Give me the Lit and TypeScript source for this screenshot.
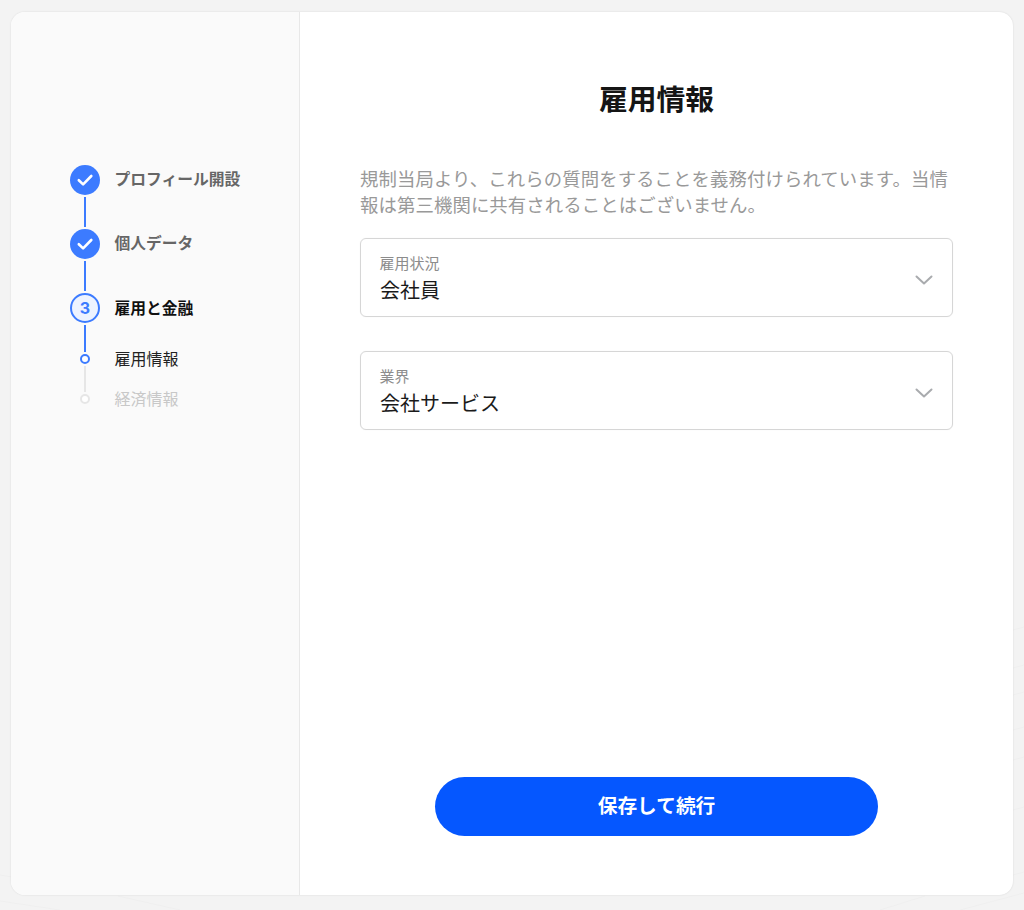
import { LitElement, html, css, svg } from "lit";
import { customElement } from "lit/decorators.js";

const check = html`<svg width="30" height="30" viewBox="0 0 30 30"><path d="M8.8 15.2l4.3 4.2 8.2-8.4" fill="none" stroke="#fff" stroke-width="2.6" stroke-linecap="round" stroke-linejoin="round"/></svg>`;
const chevron = html`<svg class="chev" width="18" height="10" viewBox="0 0 18 10"><path d="M1.5 1.5L9 8.5l7.5-7" fill="none" stroke="#a9abae" stroke-width="2" stroke-linecap="round" stroke-linejoin="round"/></svg>`;

@customElement("app-root")
export class AppRoot extends LitElement {
  static styles = css`
    :host { display: block; width: 1024px; height: 910px; position: relative; overflow: hidden; background: #f3f3f3;
      font-family: "Inter", "Noto Sans CJK JP", sans-serif; color: #151515; }
    .bg { position: absolute; inset: 0; }
    .page { position: relative; box-sizing: border-box; height: 910px; padding: 12px 11px 15px 11px; }
    .card { display: flex; height: 883px; border-radius: 14px; overflow: hidden; background: #fff; box-shadow: 0 0 2px rgba(0,0,0,.12); }
    .side { box-sizing: border-box; width: 289px; flex: none; background: #fafafa; border-right: 1px solid #e8e8e8; padding: 153px 0 0 59px; }
    .step { display: flex; align-items: center; gap: 14.5px; height: 30px; font-size: 15.75px; font-weight: 700; color: #666; }
    .step span.t { margin-top: -4px; }
    .step.cur { color: #111; }
    .step.cur span.t { margin-top: -2px; }
    .dot { box-sizing: border-box; width: 30px; height: 30px; border-radius: 50%; background: #3c7bff; display: flex; flex: none; }
    .dot.num { background: #edf3ff; border: 2px solid #3c7bff; color: #3c7bff; font-size: 16px; font-weight: 700; align-items: center; justify-content: center; }
    .line { width: 2px; height: 30px; margin: 2px 0 2px 14px; background: #3c7bff; }
    .sub { display: flex; align-items: center; height: 14px; font-size: 16px; color: #222; }
    .sub .t { margin-top: -2px; }
    .sub.off .t { margin-top: -3px; }
    .sub .mark { width: 30px; flex: none; display: flex; justify-content: center; margin-right: 14.5px; }
    .ring { box-sizing: border-box; width: 10px; height: 10px; border-radius: 50%; border: 2px solid #3c7bff; background: #fff; }
    .sub.off { color: #c8c8c8; }
    .sub.off .ring { border-color: #e6e6e6; }
    .line.l1 { height: 27px; margin: 2px 0 0 14px; }
    .line.l2 { height: 26px; margin: 0 0 0 14px; background: #e6e6e6; }
    .main { flex: 1; box-sizing: border-box; padding: 66px 60px 59px 60px; display: flex; flex-direction: column; }
    h1 { margin: 0; font-size: 28.8px; line-height: 44px; font-weight: 700; text-align: center; color: #151515; }
    .intro { margin: 44px 0 0; font-size: 18.4px; letter-spacing: .09px; line-height: 26px; color: #999; }
    .sel { box-sizing: border-box; height: 79px; margin-top: 20px; padding: 14px 19px 0; border: 1px solid #d6d6d6; border-radius: 6px; position: relative; box-shadow: 0 0 1px rgba(0,0,0,.1); }
    .sel + .sel { margin-top: 34px; }
    .lab { font-size: 15px; line-height: 22px; color: #8c8c8c; margin-left: -.5px; }
    .val { font-size: 20px; line-height: 32px; color: #1a1a1a; }
    .chev { position: absolute; right: 19px; top: 36px; }
    .btn { margin: auto auto 0; width: 443px; height: 59px; padding: 0 0 4px; border: 0; border-radius: 30px; background: #0557ff; color: #fff; font: inherit; font-size: 19.7px; font-weight: 700; }
  `;
  render() {
    return html`
      <svg class="bg" width="1024" height="910" viewBox="0 0 1024 910">
        ${svg`<g fill="none" stroke="#efefef" stroke-width="1">
          <path d="M0 875L60 885M0 901L60 910M118 896L180 910M1013 630L1024 627M1013 668L1024 665M1013 695L1024 692M1013 730L1024 727M1013 760L1024 757M1013 810L1024 807M1013 875L1024 872M880 910L925 896M960 910L1024 893"/>
        </g>`}
      </svg>
      <div class="page">
        <div class="card">
          <aside class="side">
            <div class="step"><span class="dot">${check}</span><span class="t">プロフィール開設</span></div>
            <div class="line"></div>
            <div class="step"><span class="dot">${check}</span><span class="t">個人データ</span></div>
            <div class="line"></div>
            <div class="step cur"><span class="dot num">3</span><span class="t">雇用と金融</span></div>
            <div class="line l1"></div>
            <div class="sub"><span class="mark"><i class="ring"></i></span><span class="t">雇用情報</span></div>
            <div class="line l2"></div>
            <div class="sub off"><span class="mark"><i class="ring"></i></span><span class="t">経済情報</span></div>
          </aside>
          <main class="main">
            <h1>雇用情報</h1>
            <p class="intro">規制当局より、これらの質問をすることを義務付けられています。当情報は第三機関に共有されることはございません。</p>
            <div class="sel"><div class="lab">雇用状況</div><div class="val">会社員</div>${chevron}</div>
            <div class="sel"><div class="lab">業界</div><div class="val">会社サービス</div>${chevron}</div>
            <button class="btn">保存して続行</button>
          </main>
        </div>
      </div>
    `;
  }
}
